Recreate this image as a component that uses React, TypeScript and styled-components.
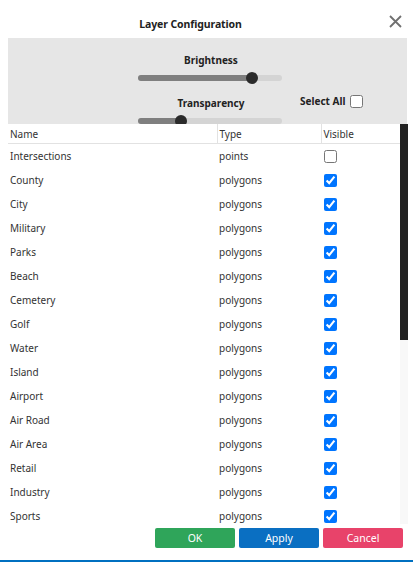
import React, { useState } from "react";
import styled, { createGlobalStyle } from "styled-components";

const GlobalStyle = createGlobalStyle`
  html, body { margin: 0; padding: 0; background: #fff; }
  body { font-family: "Noto Sans", "Open Sans", Arial, sans-serif; color: #333; }
  * { box-sizing: border-box; }
`;

const Dialog = styled.div`
  width: 413px;
  height: 562px;
  display: flex;
  flex-direction: column;
  border-bottom: 2px solid #0070c0;
  background: #fff;
  overflow: hidden;
`;

const Header = styled.div`
  height: 38px;
  display: flex;
  align-items: center;
  flex-shrink: 0;
`;

const Title = styled.div`
  flex: 1;
  text-align: center;
  font-size: 10.5px;
  font-weight: 700;
  letter-spacing: -0.1px;
  color: #222;
  padding-top: 9px;
`;

const CloseButton = styled.button`
  width: 28px;
  height: 38px;
  border: none;
  background: transparent;
  padding: 4px 0 0 0;
  margin-right: 4px;
  display: flex;
  align-items: center;
  justify-content: center;
  cursor: pointer;
`;

const Panel = styled.div`
  margin: 0 6px 0 8px;
  height: 86px;
  background: #e6e6e6;
  display: grid;
  grid-template-columns: 130px 144px 1fr;
  overflow: hidden;
  flex-shrink: 0;
`;

const SliderColumn = styled.div`
  grid-column: 2;
  display: flex;
  flex-direction: column;
  align-items: center;
  padding-top: 14px;
`;

const SliderLabel = styled.div`
  font-size: 10px;
  font-weight: 700;
  color: #222;
  line-height: 16px;
  height: 16px;
  padding-left: 2px;
`;

const Track = styled.div`
  position: relative;
  width: 144px;
  height: 6px;
  border-radius: 3px;
  background: #d4d4d4;
  margin-top: 7px;
  margin-bottom: 14px;
`;

const Fill = styled.div`
  height: 100%;
  border-radius: 3px;
  background: #7f7f7f;
`;

const Thumb = styled.div`
  position: absolute;
  top: 50%;
  width: 12px;
  height: 12px;
  margin-left: -6px;
  margin-top: -6px;
  border-radius: 50%;
  background: #2b2b2b;
`;

const SelectAll = styled.label`
  grid-column: 3;
  align-self: start;
  margin-top: 56px;
  padding-left: 18px;
  display: flex;
  align-items: center;
  gap: 5px;
  font-size: 10px;
  font-weight: 700;
  color: #222;
`;

const Check = styled.input.attrs({ type: "checkbox" })`
  width: 13px;
  height: 13px;
  margin: 0;
  accent-color: #0075ff;
`;

const TableArea = styled.div`
  margin-left: 8px;
  width: 400px;
  height: 400px;
  display: flex;
  flex-shrink: 0;
  overflow: hidden;
`;

const Table = styled.table`
  width: 392px;
  height: fit-content;
  border-collapse: collapse;
  table-layout: fixed;
  font-size: 10px;
  color: #333;
`;

const Scrollbar = styled.div`
  width: 8px;
  height: 100%;
  background: #f8f8f8;
  display: flex;
  flex-direction: column;
`;

const ScrollThumb = styled.div`
  height: 216px;
  background: #222;
`;

const Th = styled.th<{ $w: number; $sep?: boolean }>`
  width: ${(p) => p.$w}px;
  height: 19px;
  padding: 2px 2px 0;
  text-align: left;
  font-weight: 400;
  border-bottom: 1px solid #e2e2e2;
  border-left: ${(p) => (p.$sep ? "1px solid #e2e2e2" : "none")};
`;

const Td = styled.td`
  height: 24px;
  padding: 2px 2px 0;
  vertical-align: middle;
  white-space: nowrap;
`;

const CheckCell = styled(Td)`
  padding-left: 3px;
  line-height: 0;
`;

const Footer = styled.div`
  flex: 1;
  display: flex;
  justify-content: flex-end;
  align-items: flex-start;
  gap: 4px;
  padding: 4px 10px 0 0;
`;

const Btn = styled.button<{ $bg: string }>`
  width: 80px;
  height: 20px;
  border: none;
  border-radius: 2px;
  background: ${(p) => p.$bg};
  color: #fff;
  font-family: inherit;
  font-size: 10.5px;
  padding: 0;
  cursor: pointer;
`;

const layers: [string, string, boolean][] = [
  ["Intersections", "points", false],
  ["County", "polygons", true],
  ["City", "polygons", true],
  ["Military", "polygons", true],
  ["Parks", "polygons", true],
  ["Beach", "polygons", true],
  ["Cemetery", "polygons", true],
  ["Golf", "polygons", true],
  ["Water", "polygons", true],
  ["Island", "polygons", true],
  ["Airport", "polygons", true],
  ["Air Road", "polygons", true],
  ["Air Area", "polygons", true],
  ["Retail", "polygons", true],
  ["Industry", "polygons", true],
  ["Sports", "polygons", true],
];

const Slider: React.FC<{ label: string; value: number }> = ({ label, value }) => (
  <>
    <SliderLabel>{label}</SliderLabel>
    <Track>
      <Fill style={{ width: `${value}%` }} />
      <Thumb style={{ left: `${value}%` }} />
    </Track>
  </>
);

export default function App() {
  const [checks, setChecks] = useState(layers.map((l) => l[2]));
  return (
    <>
      <GlobalStyle />
      <Dialog>
        <Header>
          <Title>Layer Configuration</Title>
          <CloseButton aria-label="Close">
            <svg width="13" height="13" viewBox="0 0 13 13">
              <path d="M1 1 L12 12 M12 1 L1 12" stroke="#707070" strokeWidth="1.8" />
            </svg>
          </CloseButton>
        </Header>
        <Panel>
          <SliderColumn>
            <Slider label="Brightness" value={79} />
            <Slider label="Transparency" value={30} />
          </SliderColumn>
          <SelectAll>
            Select All <Check />
          </SelectAll>
        </Panel>
        <TableArea>
          <Table>
            <thead>
              <tr>
                <Th $w={209}>Name</Th>
                <Th $w={104} $sep>Type</Th>
                <Th $w={79} $sep>Visible</Th>
              </tr>
            </thead>
            <tbody>
              {layers.map(([name, type], i) => (
                <tr key={name}>
                  <Td>{name}</Td>
                  <Td>{type}</Td>
                  <CheckCell>
                    <Check
                      checked={checks[i]}
                      onChange={() =>
                        setChecks((c) => c.map((v, j) => (j === i ? !v : v)))
                      }
                    />
                  </CheckCell>
                </tr>
              ))}
            </tbody>
          </Table>
          <Scrollbar>
            <ScrollThumb />
          </Scrollbar>
        </TableArea>
        <Footer>
          <Btn $bg="#2fa55a">OK</Btn>
          <Btn $bg="#0a6fc2">Apply</Btn>
          <Btn $bg="#e8436a">Cancel</Btn>
        </Footer>
      </Dialog>
    </>
  );
}
